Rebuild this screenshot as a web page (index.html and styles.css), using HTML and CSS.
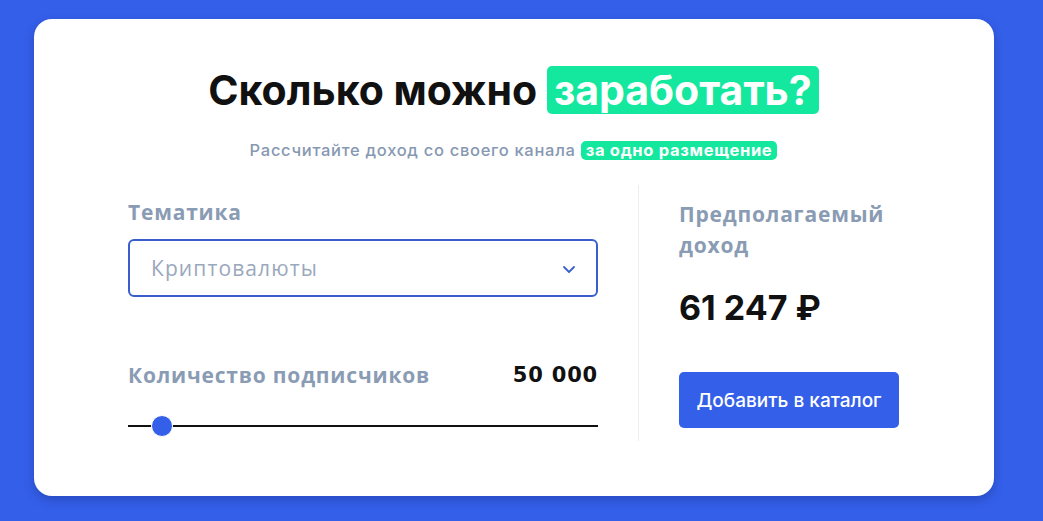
FILE: index.html
```html
<!DOCTYPE html>
<html lang="ru">
<head>
<meta charset="utf-8">
<title>Калькулятор дохода</title>
<link rel="stylesheet" href="styles.css">
</head>
<body>
<div class="card">
  <h1 class="title">Сколько можно <span class="hl">заработать?</span></h1>
  <p class="subtitle">Рассчитайте доход со своего канала <span class="pill">за одно размещение</span></p>
  <div class="grid">
    <div class="left">
      <div class="label">Тематика</div>
      <div class="select">
        <span class="placeholder">Криптовалюты</span>
        <svg class="chev" width="14" height="9" viewBox="0 0 14 9"><path d="M2 2l5 5 5-5" fill="none" stroke="#3a5fcc" stroke-width="1.8" stroke-linecap="round" stroke-linejoin="round"/></svg>
      </div>
      <div class="row">
        <div class="label">Количество подписчиков</div>
        <div class="count">50 000</div>
      </div>
      <div class="slider">
        <div class="track"></div>
        <div class="thumb"></div>
      </div>
    </div>
    <div class="divider"></div>
    <div class="right">
      <div class="label label-tall">Предполагаемый<br>доход</div>
      <div class="price">61 247 ₽</div>
      <button class="btn">Добавить в каталог</button>
    </div>
  </div>
</div>
</body>
</html>
```
FILE: styles.css
```css
html, body { margin: 0; padding: 0; }
body {
  background: #345fe8;
  width: 1043px;
  height: 521px;
  overflow: hidden;
  font-family: "Inter", "Noto Sans", sans-serif;
}
.card {
  margin: 19px 0 0 34px;
  width: 960px;
  height: 477px;
  box-sizing: border-box;
  background: #fff;
  border-radius: 18px;
  box-shadow: 0 4px 10px rgba(20, 40, 120, 0.35);
  padding: 47px 95px 0 94px;
}
.title {
  margin: 0;
  text-align: center;
  font-size: 41px;
  line-height: 48px;
  font-weight: 700;
  color: #111;
  letter-spacing: 0;
}
.hl {
  display: inline-block;
  background: #14e89f;
  color: #fff;
  border-radius: 5px;
  padding: 0 7px;
  line-height: 48px;
}
.subtitle {
  margin: 27px 0 0;
  text-align: center;
  font-size: 16.5px;
  line-height: 19px;
  color: #8798b2;
  font-weight: 500;
  letter-spacing: 0.7px;
}
.pill {
  display: inline-block;
  background: #14e89f;
  color: #fff;
  font-weight: 700;
  border-radius: 5px;
  padding: 0 5px;
  line-height: 19px;
}
.grid {
  margin-top: 25px;
  display: flex;
  align-items: stretch;
}
.left {
  width: 470px;
  padding-top: 15px;
}
.divider {
  width: 1px;
  background: #ebedf1;
  margin: 0 40px;
  height: 256px;
}
.right {
  flex: 1;
  padding-top: 15px;
}
.label {
  font-family: "Open Sans", "Noto Sans", sans-serif;
  font-size: 21px;
  line-height: 24px;
  font-weight: 700;
  color: #8a9bb4;
  letter-spacing: 0.8px;
}
.label-tall { line-height: 31px; margin-top: -1px; }
.select {
  margin-top: 15px;
  height: 58px;
  box-sizing: border-box;
  border: 2px solid #3a5fcc;
  border-radius: 6px;
  display: flex;
  align-items: center;
  justify-content: space-between;
  padding: 0 20px 0 21px;
}
.placeholder {
  font-family: "Open Sans", "Noto Sans", sans-serif;
  font-size: 21px;
  color: #9aa8bd;
  letter-spacing: 1.1px;
}
.chev { margin-top: 2px; }
.row {
  margin-top: 66px;
  display: flex;
  justify-content: space-between;
  align-items: center;
}
.count {
  font-family: "DejaVu Sans", sans-serif;
  font-size: 21px;
  font-weight: 700;
  color: #111;
  letter-spacing: 0.8px;
}
.slider {
  position: relative;
  margin-top: 28px;
  height: 22px;
  display: flex;
  align-items: center;
}
.track {
  width: 100%;
  height: 2px;
  background: #111;
}
.thumb {
  position: absolute;
  left: 23px;
  top: 0;
  width: 22px;
  height: 22px;
  border-radius: 50%;
  background: #345fe8;
  border: 1px solid #fff;
  box-sizing: border-box;
}
.price {
  margin-top: 27px;
  font-size: 34px;
  line-height: 40px;
  font-weight: 700;
  color: #111;
}
.btn {
  margin-top: 44px;
  width: 220px;
  height: 56px;
  border: none;
  border-radius: 5px;
  background: #345fe8;
  color: #fff;
  font-family: "Inter", "Noto Sans", sans-serif;
  font-size: 19px;
  font-weight: 500;
  cursor: pointer;
}
```
